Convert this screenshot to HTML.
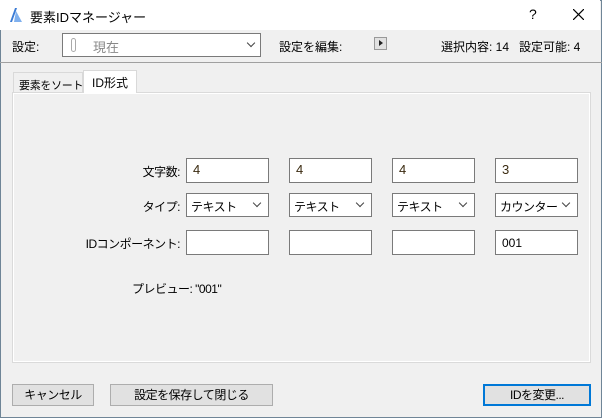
<!DOCTYPE html>
<html><head><meta charset="utf-8"><style>
*{box-sizing:border-box;margin:0;padding:0}
body{width:602px;height:418px;overflow:hidden;background:#f0f0f0;font-family:"Liberation Sans","Noto Sans CJK JP",sans-serif;font-size:12px;color:#000;position:relative}
.win{position:absolute;left:0;top:0;width:602px;height:418px;border:1px solid #6f8597}
.title{position:absolute;left:0;top:0;width:600px;height:30px;background:#fff}
.a{position:absolute;white-space:nowrap}
.box{position:absolute;background:#fff;border:1px solid #7a7a7a;height:25px;padding:3px 6px;color:#3a2a10;font-size:13px}
.dd{position:absolute;background:#fff;border:1px solid #7a7a7a;height:24px;padding:4px 4px;font-size:12px;letter-spacing:-0.5px;white-space:nowrap}
.dd:after{content:"";position:absolute;right:8px;top:6px;width:5px;height:5px;border-right:1px solid #444;border-bottom:1px solid #444;transform:rotate(45deg)}
.btn{position:absolute;top:384px;height:22px;background:#e1e1e1;border:1px solid #adadad;text-align:center;line-height:20px;font-size:12px;letter-spacing:-0.5px}
.lbl{position:absolute;text-align:right;width:170px;left:10px;letter-spacing:-0.5px}
</style></head><body>
<div class="win"></div>
<div class="title"></div>
<svg class="a" style="left:9px;top:7px" width="14" height="16"><path d="M1 15 L6 1 L8 1 L3 15Z" fill="#3a7bd5"/><path d="M7 4 L13 15 L5 15Z" fill="#7fb0ee"/></svg>
<div class="a" style="left:30px;top:7px;font-size:13px">要素IDマネージャー</div>
<div class="a" style="left:529px;top:6px;font-size:14px">?</div>
<svg class="a" style="left:573px;top:9px" width="11" height="11"><path d="M0 0L11 11M11 0L0 11" stroke="#000" stroke-width="1.2"/></svg>
<div class="a" style="left:12px;top:38px">設定:</div>
<div class="a" style="left:62px;top:33px;width:199px;height:24px;background:#fff;border:1px solid #7a7a7a"></div>
<div class="a" style="left:71px;top:38px;width:5px;height:14px;border:1px solid #aaa;border-radius:3px"></div>
<div class="a" style="left:93px;top:37px;color:#888;font-size:13px">現在</div>
<div class="a" style="left:248px;top:40px;width:6px;height:6px;border-right:1px solid #444;border-bottom:1px solid #444;transform:rotate(45deg)"></div>
<div class="a" style="left:279px;top:38px">設定を編集:</div>
<div class="a" style="left:374px;top:37px;width:13px;height:13px;border:1px solid #999;background:#e1e1e1"></div>
<div class="a" style="left:379px;top:40px;width:0;height:0;border-left:4px solid #222;border-top:3.5px solid transparent;border-bottom:3.5px solid transparent"></div>
<div class="a" style="left:441px;top:38px">選択内容: 14&nbsp;&nbsp; 設定可能: 4</div>
<div class="a" style="left:0;top:62px;width:602px;height:1px;background:#a0a0a0"></div>
<div class="a" style="left:12px;top:92px;width:579px;height:271px;border:1px solid #dadada;background:#f0f0f0;box-shadow:inset 0 0 0 1px #fff"></div>
<div class="a" style="left:13px;top:72px;width:70px;height:21px;border:1px solid #d9d9d9;border-bottom:none;padding:4px 0 0 5px;font-size:11px;letter-spacing:-0.3px">要素をソート</div>
<div class="a" style="left:83px;top:70px;width:54px;height:23px;background:#fff;border:1px solid #d9d9d9;border-bottom:none;padding:3px 0 0 8px">ID形式</div>
<div class="lbl" style="top:163px">文字数:</div>
<div class="lbl" style="top:198px">タイプ:</div>
<div class="lbl" style="top:235px">IDコンポーネント:</div>
<div class="box" style="left:186px;top:158px;width:83px">4</div>
<div class="box" style="left:289px;top:158px;width:83px">4</div>
<div class="box" style="left:392px;top:158px;width:83px">4</div>
<div class="box" style="left:495px;top:158px;width:83px">3</div>
<div class="dd" style="left:186px;top:193px;width:83px">テキスト</div>
<div class="dd" style="left:289px;top:193px;width:83px">テキスト</div>
<div class="dd" style="left:392px;top:193px;width:83px">テキスト</div>
<div class="dd" style="left:495px;top:193px;width:83px">カウンター</div>
<div class="box" style="left:186px;top:230px;width:83px"></div>
<div class="box" style="left:289px;top:230px;width:83px"></div>
<div class="box" style="left:392px;top:230px;width:83px"></div>
<div class="box" style="left:495px;top:230px;width:83px;font-size:12px;color:#000;padding-top:5px">001</div>
<div class="a" style="left:132px;top:280px;letter-spacing:-0.5px">プレビュー: "001"</div>
<div class="btn" style="left:12px;width:82px">キャンセル</div>
<div class="btn" style="left:110px;width:163px">設定を保存して閉じる</div>
<div class="btn" style="left:483px;width:108px;border:2px solid #0078d7;line-height:18px">IDを変更...</div>
</body></html>
